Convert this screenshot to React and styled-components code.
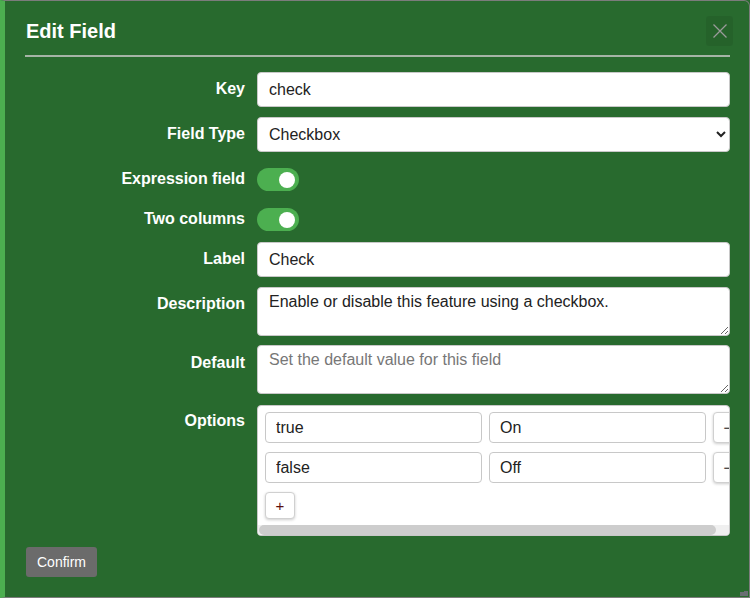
import React from 'react';
import styled, { createGlobalStyle } from 'styled-components';

const GlobalStyle = createGlobalStyle`
    html, body {
        margin: 0;
        padding: 0;
        height: 100%;
    }
    body {
        font-family: 'Liberation Sans', Arial, sans-serif;
        background: #286a2e;
    }
`;

const options = [
    { value: 'true', label: 'On' },
    { value: 'false', label: 'Off' },
];

const App = () => {
    return (
        <>
            <GlobalStyle />
            <Dialog>
                <Header>
                    <Title>Edit Field</Title>
                    <CloseButton aria-label="Close">
                        <svg width="16" height="16" viewBox="0 0 16 16">
                            <path d="M1.5 1.5 L14.5 14.5 M14.5 1.5 L1.5 14.5" stroke="#9a9a9a" strokeWidth="1.3" fill="none" />
                        </svg>
                    </CloseButton>
                </Header>
                <Divider />
                <Form>
                    <Label>Key</Label>
                    <Input defaultValue="check" />

                    <Label>Field Type</Label>
                    <Select defaultValue="checkbox">
                        <option value="checkbox">Checkbox</option>
                        <option value="text">Text</option>
                    </Select>

                    <Label>Expression field</Label>
                    <ToggleCell>
                        <Toggle $on />
                    </ToggleCell>

                    <Label>Two columns</Label>
                    <ToggleCell>
                        <Toggle $on />
                    </ToggleCell>

                    <Label>Label</Label>
                    <Input defaultValue="Check" />

                    <Label>Description</Label>
                    <TextArea defaultValue="Enable or disable this feature using a checkbox." />

                    <Label>Default</Label>
                    <TextArea $tight placeholder="Set the default value for this field" />

                    <Label>Options</Label>
                    <OptionsBox>
                        <OptionsViewport>
                            <OptionsInner>
                                {options.map((o) => (
                                    <OptionRow key={o.value}>
                                        <OptionInput defaultValue={o.value} />
                                        <OptionInput defaultValue={o.label} />
                                        <SmallButton>−</SmallButton>
                                    </OptionRow>
                                ))}
                                <AddRow>
                                    <SmallButton $add>+</SmallButton>
                                </AddRow>
                            </OptionsInner>
                        </OptionsViewport>
                        <ScrollTrack>
                            <ScrollThumb />
                        </ScrollTrack>
                    </OptionsBox>
                </Form>
                <Footer>
                    <ConfirmButton>Confirm</ConfirmButton>
                </Footer>
                <ResizeHandle />
            </Dialog>
        </>
    );
};

export default App;


const Dialog = styled.div`
    position: relative;
    box-sizing: border-box;
    width: 750px;
    height: 598px;
    background: #286a2e;
    border: 1px solid #7c7c7c;
    border-left: 5px solid #4caf50;
    border-top-right-radius: 6px;
    padding: 15px 19px 0 21px;
    color: #fff;
`;

const Header = styled.div`
    display: flex;
    align-items: center;
    justify-content: space-between;
    height: 30px;
    margin-left: -1px;
`;

const Title = styled.h2`
    margin: 0 0 0 1px;
    font-size: 20px;
    font-weight: 700;
    color: #fff;
`;

const CloseButton = styled.button`
    display: flex;
    align-items: center;
    justify-content: center;
    width: 27px;
    height: 30px;
    margin-right: -3px;
    padding: 0;
    border: none;
    border-radius: 3px;
    background: rgba(0, 0, 0, 0.07);
    cursor: pointer;
`;

const Divider = styled.div`
    height: 2px;
    margin: 9px 0 0 -1px;
    background: #a6b4a6;
`;

const Form = styled.div`
    display: grid;
    grid-template-columns: 219px 1fr;
    column-gap: 12px;
    row-gap: 10px;
    margin-top: 15px;
`;

const Label = styled.label`
    text-align: right;
    font-size: 16px;
    font-weight: 700;
    line-height: 18px;
    padding-top: 8px;
    color: #fff;
`;

const fieldBase = `
    box-sizing: border-box;
    width: 100%;
    font-family: 'Liberation Sans', Arial, sans-serif;
    font-size: 16px;
    color: #222;
    background: #fff;
    border: 1px solid #c8c8c8;
    border-radius: 4px;
    outline: none;
`;

const Input = styled.input`
    ${fieldBase}
    height: 35px;
    padding: 0 11px;
`;

const Select = styled.select`
    ${fieldBase}
    height: 35px;
    padding: 0 7px;
`;

const TextArea = styled.textarea`
    ${fieldBase}
    height: 49px;
    padding: 5px 11px;
    line-height: 18px;
    resize: vertical;
    display: block;
    margin-top: ${(p) => (p.$tight ? '-1px' : '0')};

    &::placeholder {
        color: #777;
    }
`;

const ToggleCell = styled.div`
    padding: 6px 0 1px;
`;

const Toggle = styled.div`
    position: relative;
    width: 42px;
    height: 23px;
    border-radius: 12px;
    background: ${(p) => (p.$on ? '#4caf50' : '#ccc')};

    &::after {
        content: '';
        position: absolute;
        top: 3.5px;
        left: ${(p) => (p.$on ? '22px' : '4px')};
        width: 16px;
        height: 16px;
        border-radius: 50%;
        background: #fff;
    }
`;

const OptionsBox = styled.div`
    box-sizing: border-box;
    display: flex;
    flex-direction: column;
    height: 131px;
    margin-top: 1px;
    background: #fff;
    border: 1px solid #c8c8c8;
    border-radius: 4px;
    overflow: hidden;
`;

const OptionsViewport = styled.div`
    flex: 1;
    overflow: hidden;
`;

const OptionsInner = styled.div`
    display: flex;
    flex-direction: column;
    gap: 9px;
    width: max-content;
    padding: 6px 7px;
`;

const OptionRow = styled.div`
    display: flex;
    gap: 7px;
`;

const OptionInput = styled.input`
    ${fieldBase}
    width: 217px;
    height: 31px;
    padding: 0 10px;
`;

const AddRow = styled.div`
    display: flex;
`;

const SmallButton = styled.button`
    box-sizing: border-box;
    width: 30px;
    height: ${(p) => (p.$add ? '27px' : '31px')};
    padding: 0;
    font-family: 'Liberation Sans', Arial, sans-serif;
    font-size: 15px;
    color: ${(p) => (p.$add ? '#5a0f0f' : '#222')};
    background: #fff;
    border: 1px solid #d0d0d0;
    border-radius: 4px;
    box-shadow: 0 1px 3px rgba(0, 0, 0, 0.2);
    cursor: pointer;
`;

const ScrollTrack = styled.div`
    height: 10px;
    flex-shrink: 0;
    background: #f0f0f0;
    padding: 0 13px 0 1px;
`;

const ScrollThumb = styled.div`
    height: 100%;
    border-radius: 5px;
    background: #cdcdcd;
`;

const Footer = styled.div`
    display: flex;
    margin-top: 11px;
`;

const ConfirmButton = styled.button`
    height: 30px;
    padding: 0 11px;
    font-family: 'Liberation Sans', Arial, sans-serif;
    font-size: 14px;
    color: #fff;
    background: #6b6b6b;
    border: none;
    border-radius: 3px;
    cursor: pointer;
`;

const ResizeHandle = styled.div`
    position: absolute;
    right: 1px;
    bottom: 1px;
    width: 8px;
    height: 8px;
    background: linear-gradient(to bottom, transparent 0 3px, #6f6f7a 3px) right / 4px 100% no-repeat,
        linear-gradient(to right, transparent 0, #6f6f7a 0) bottom / 100% 4px no-repeat;
    opacity: 0.9;
`;
